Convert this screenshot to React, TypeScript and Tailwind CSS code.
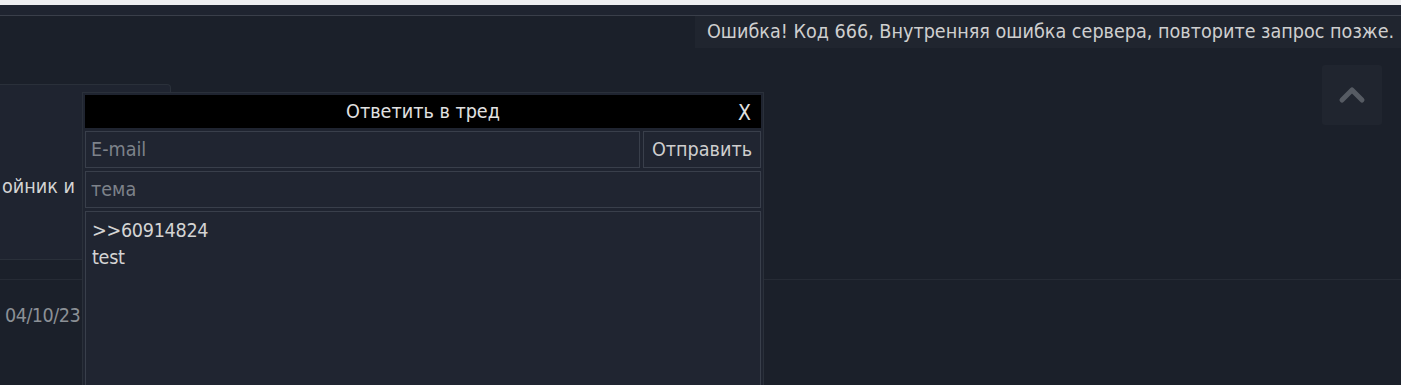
import { useState } from "react";

export default function App() {
  const [email, setEmail] = useState("");
  const [subject, setSubject] = useState("");
  const [text, setText] = useState(">>60914824\ntest");

  return (
    <div className="relative h-[385px] w-[1401px] overflow-hidden bg-[#1b202a] font-['DejaVu_Sans_Condensed','DejaVu_Sans',sans-serif] text-[19.6px] text-[#d4d4d4]">
      {/* top strip */}
      <div className="h-[5px] bg-[#eeeff1]" />
      <div className="h-[11px] border-b border-[#3a3f4a] bg-[#1f2430]" />

      {/* page content behind the form */}
      <div className="pt-[68px]">
        <div className="flex h-[176px] w-[171px] items-center rounded-tr-[4px] border-t border-r border-b border-[#2a303a] bg-[#1f2430]">
          <span className="ml-[2px] mt-[30px] whitespace-nowrap text-[#d4d4d4]">ойник и</span>
        </div>
        <div className="h-[19px]" />
        <div className="flex h-[80px] items-start border-t border-[#262b35] pl-[5px] pt-[21px]">
          <span className="whitespace-nowrap tracking-[-0.5px] text-[#8b9096]">04/10/23</span>
        </div>
      </div>

      {/* error toast */}
      <div className="absolute right-0 top-[16px] flex h-[32px] w-[706px] items-center whitespace-nowrap bg-[#20252f] pl-[12px] text-[#cfcfcf]">
        Ошибка! Код 666, Внутренняя ошибка сервера, повторите запрос позже.
      </div>

      {/* scroll to top */}
      <button className="absolute left-[1322px] top-[65px] flex h-[60px] w-[60px] items-center justify-center rounded-[3px] bg-[#20252f]">
        <svg width="28" height="20" viewBox="0 0 28 20">
          <path d="M4 15 L14 5 L24 15" fill="none" stroke="#565b63" strokeWidth="5" strokeLinecap="round" strokeLinejoin="round" />
        </svg>
      </button>

      {/* reply form */}
      <div className="absolute left-[82px] top-[92px] flex w-[682px] flex-col gap-[3px] border border-[#2a303a] bg-[#1f2430] p-[2px] pb-0">
        <div className="relative flex h-[33px] items-center justify-center bg-black text-[#e2e2e2]">
          Ответить в тред
          <span className="absolute right-[10px] top-[3px] text-[21px] text-[#e2e2e2]">X</span>
        </div>
        <div className="flex gap-[3px]">
          <input
            className="h-[37px] w-[555px] border border-[#393f4b] bg-[#202531] px-[5px] text-[#d4d4d4] outline-none placeholder:text-[#7d828a]"
            placeholder="E-mail"
            value={email}
            onChange={(e) => setEmail(e.target.value)}
          />
          <button className="h-[37px] flex-1 border border-[#393f4b] bg-[#202531] text-[#cfcfcf]">Отправить</button>
        </div>
        <input
          className="h-[37px] border border-[#393f4b] bg-[#202531] px-[5px] text-[#d4d4d4] outline-none placeholder:text-[#7d828a]"
          placeholder="тема"
          value={subject}
          onChange={(e) => setSubject(e.target.value)}
        />
        <textarea
          className="h-[200px] resize-none border border-[#393f4b] bg-[#202531] px-[6px] pt-[5px] leading-[27px] tracking-[-0.3px] text-[#d4d4d4] outline-none"
          value={text}
          onChange={(e) => setText(e.target.value)}
        />
      </div>
    </div>
  );
}
